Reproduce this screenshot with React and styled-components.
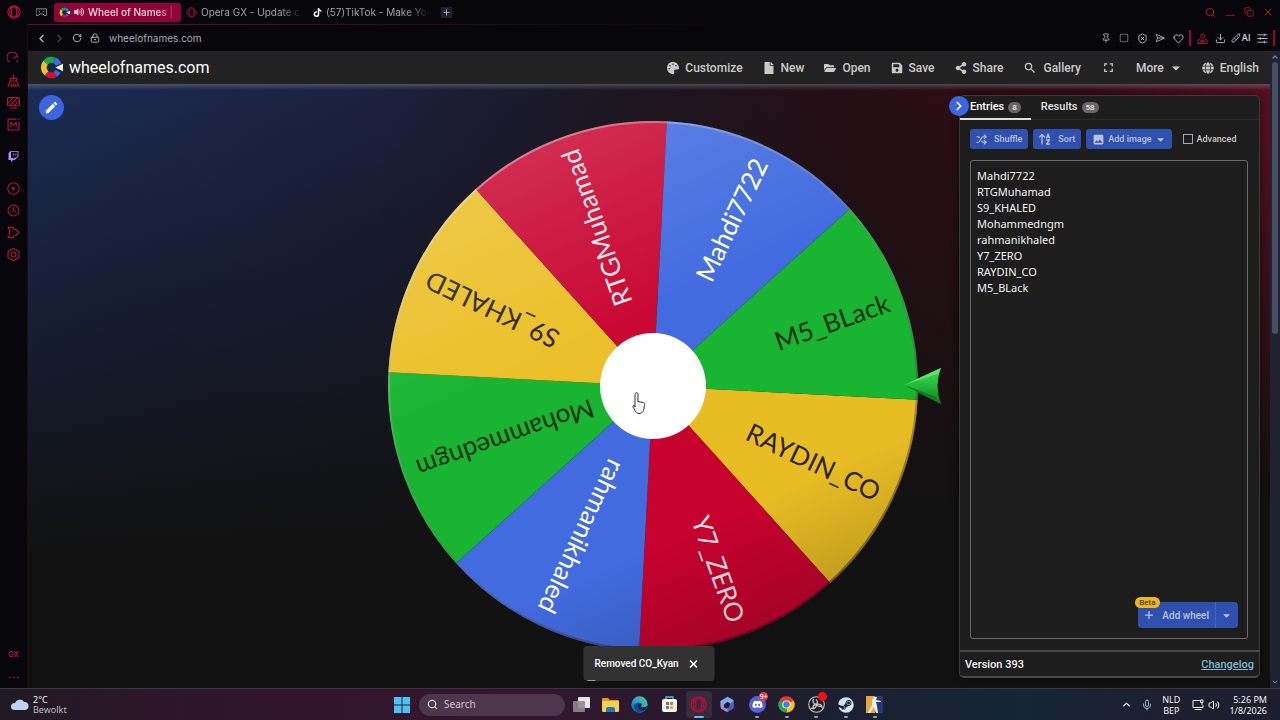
import React from "react";
import styled, { createGlobalStyle, css } from "styled-components";
import {
  ChevronLeft, ChevronRight, ChevronUp, ChevronDown, RotateCw, LockKeyhole, Pin, SquareDashed, ShieldX,
  SendHorizontal, Heart, Download, Search, X, Plus, Clock, Puzzle, Hexagon, Mic, Volume2, Shuffle, Copy,
} from "lucide-react";
import {
  FaPalette, FaFile, FaFolderOpen, FaSave, FaShareAlt, FaGlobe, FaTiktok, FaTwitch, FaVolumeUp, FaCaretDown,
  FaSteam, FaDiscord,
} from "react-icons/fa";
import { MdFullscreen, MdEdit, MdImage, MdSearch } from "react-icons/md";

const GlobalStyle = createGlobalStyle`
  *, *::before, *::after { box-sizing: border-box; }
  body { margin: 0; background: #111; font-family: Roboto, "Liberation Sans", sans-serif; }
  button, input, textarea { font: inherit; color: inherit; }
  button { border: 0; padding: 0; background: none; cursor: pointer; }
  svg { display: block; flex: none; }
  a { color: inherit; }
`;

const crimson = "#c01443";

const Desktop = styled.div`
  min-height: 100vh;
  display: flex;
  flex-direction: column;
`;
const Browser = styled.div`
  flex: 1;
  display: flex;
  flex-direction: column;
  background: #06060b;
`;

/* ---- tab strip ---- */
const TabStrip = styled.div`
  height: 24px;
  display: flex;
  align-items: center;
  font: 400 10px/18px Inter, "Liberation Sans", sans-serif;
  color: #a3a2ac;
`;
const StripIcon = styled.button`
  width: ${(p) => p.$w || 28}px;
  height: 24px;
  display: grid;
  place-items: center;
  color: ${(p) => (p.$red ? crimson : "#9c9ca8")};
`;
const Tab = styled.button`
  width: 127px;
  height: 19px;
  padding: 0 5px;
  display: flex;
  align-items: center;
  gap: 4px;
  border-radius: 3px;
  text-align: left;
  ${(p) => p.$active && css`background: #920437; color: #f3d7df; font-weight: 500;`}
`;
const TabTitle = styled.span`
  flex: 1;
  min-width: 0;
  overflow: hidden;
  white-space: nowrap;
  mask-image: linear-gradient(90deg, #000 78%, transparent);
`;
const NewTab = styled.button`
  width: 11px;
  height: 11px;
  margin-left: 6px;
  display: grid;
  place-items: center;
  background: #20202c;
  color: #c8c8d2;
`;
const WindowControls = styled.div`
  margin-left: auto;
  padding-right: 3px;
  display: flex;
`;

/* ---- browser body ---- */
const Body = styled.div`
  flex: 1;
  display: flex;
`;
const Sidebar = styled.nav`
  width: 28px;
  padding-top: 23px;
  display: flex;
  flex-direction: column;
  align-items: center;
  border-right: 1px solid #260812;
  color: #ae1540;
`;
const SideButton = styled.button`
  width: 22px;
  height: 22px;
  margin-top: ${(p) => (p.$gap ? 10 : 0)}px;
  display: grid;
  place-items: center;
  font: 700 7px/10px Inter, sans-serif;
`;
const SideBottom = styled.div`
  margin-top: auto;
`;
const Page = styled.div`
  flex: 1;
  min-width: 0;
  display: flex;
  flex-direction: column;
`;
const AddressBar = styled.div`
  height: 27px;
  padding: 0 3px 0 4px;
  display: flex;
  align-items: center;
  color: #c2c2cb;
  border-top: 1px solid;
  border-image: linear-gradient(90deg, #6b0a2b, #2c0715 35%, transparent 58%) 1;
`;
const BarButton = styled.button`
  width: 18px;
  height: 18px;
  display: grid;
  place-items: center;
  color: ${(p) => (p.$red ? crimson : p.$dim ? "#4c4c57" : "inherit")};
`;
const Url = styled.input`
  flex: 1;
  min-width: 0;
  margin-left: 5px;
  padding: 0;
  border: 0;
  outline: 0;
  background: none;
  color: #a9a9b3;
  font: 400 10px/16px Inter, "Liberation Sans", sans-serif;
`;
const RedBar = styled.span`
  width: 2px;
  height: 16px;
  margin: 0 2px;
  background: #8c0d34;
`;
const AiButton = styled(BarButton)`
  width: 24px;
  display: flex;
  align-items: center;
  justify-content: center;
  font: 600 9px/12px Inter, sans-serif;
`;
const Viewport = styled.div`
  flex: 1;
  display: flex;
`;
const Scrollbar = styled.div`
  width: 10px;
  padding: 2px 2px 2px 1px;
  display: flex;
  flex-direction: column;
  align-items: center;
  justify-content: space-between;
  background: #202230;
  color: #777b90;
`;
const Thumb = styled.div`
  width: 6px;
  flex: 0 0 43%;
  margin: 1px 0 auto;
  border-radius: 3px;
  background: #484d66;
`;

/* ---- site ---- */
const Site = styled.div`
  flex: 1;
  min-width: 0;
  display: flex;
  flex-direction: column;
`;
const SiteHeader = styled.header`
  height: 33px;
  padding: 0 11px 0 12px;
  display: flex;
  align-items: center;
  justify-content: space-between;
  background: #222;
`;
const Brand = styled.a`
  display: flex;
  align-items: center;
  gap: 6px;
  color: #fff;
  font-size: 16px;
  line-height: 20px;
  text-decoration: none;
`;
const Nav = styled.nav`
  display: flex;
  align-items: center;
  gap: 20px;
`;
const NavButton = styled.button`
  display: flex;
  align-items: center;
  gap: 6px;
  color: #cacaca;
  font-size: 12px;
  font-weight: 500;
  line-height: 16px;
`;
const Main = styled.main`
  flex: 1;
  display: flex;
  position: relative;
  padding: 0 10px 10px 0;
  background:
    linear-gradient(180deg, rgba(120, 125, 140, 0.5), transparent 6px),
    linear-gradient(178deg, transparent, rgba(17, 17, 17, 0.5) 35%, #111 72%),
    linear-gradient(90deg, #1b2c56, #1c2140 28%, #1d1824 46%, #270f16 66%, #3a0c16 84%, #620f22);
`;
const Stage = styled.section`
  flex: 1;
  min-width: 0;
  padding: 11px 17px 0 11px;
  display: flex;
  align-items: flex-start;
  justify-content: space-between;
`;
const RoundButton = styled.button`
  width: ${(p) => p.$size}px;
  height: ${(p) => p.$size}px;
  display: grid;
  place-items: center;
  border-radius: 50%;
  background: #3c66e0;
  color: #fff;
`;
const WheelSvg = styled.svg`
  width: 554px;
  max-width: calc(100% - 30px);
  margin-top: 26px;
  overflow: visible;
  font: 400 26px Lato, "Liberation Sans", sans-serif;
`;

/* ---- entries panel ---- */
const Panel = styled.aside`
  position: relative;
  width: 301px;
  margin-top: 11px;
  display: flex;
  flex-direction: column;
  background: #1d1d1d;
  border: 1px solid #3a3a3a;
  border-bottom: 2px solid #484848;
  border-radius: 5px;
  box-shadow: 0 0 8px rgba(0, 0, 0, 0.5);
`;
const CollapseSpot = styled.div`
  position: absolute;
  left: -11px;
  top: 0;
`;
const PanelTabs = styled.div`
  height: 24px;
  display: flex;
  border-bottom: 1px solid #2b2b2b;
`;
const PanelTab = styled.button`
  height: 24px;
  padding: 0 10px;
  display: flex;
  align-items: center;
  gap: 4px;
  font-size: 11px;
  font-weight: 500;
  line-height: 14px;
  color: ${(p) => (p.$active ? "#fff" : "#e3e3e3")};
  border-bottom: 2px solid ${(p) => (p.$active ? "#ddd" : "transparent")};
`;
const Count = styled.span`
  padding: 0 4px;
  border-radius: 6px;
  background: #666;
  color: #e6e6e6;
  font-size: 8px;
  line-height: 11px;
`;
const Tools = styled.div`
  padding: 9px 10px 0;
  display: flex;
  align-items: center;
  gap: 5px;
`;
const ToolButton = styled.button`
  height: 20px;
  padding: 0 6px;
  display: flex;
  align-items: center;
  gap: ${(p) => p.$gap || 7}px;
  border-radius: 3px;
  background: #3050b0;
  color: #b9c3e4;
  font-size: 9px;
  font-weight: 500;
  line-height: 12px;
  white-space: nowrap;
`;
const CheckLabel = styled.label`
  margin-left: 6px;
  display: flex;
  align-items: center;
  gap: 4px;
  color: #c9c9c9;
  font-size: 9px;
  font-weight: 500;
`;
const Check = styled.input`
  appearance: none;
  width: 10px;
  height: 10px;
  margin: 0;
  border: 1px solid #a8a8a8;
  &:checked { background: #3050b0; }
`;
const EntryBox = styled.div`
  position: relative;
  flex: 1;
  margin: 11px 11px 11px 10px;
  display: flex;
`;
const Entries = styled.textarea`
  flex: 1;
  min-width: 0;
  padding: 7px 6px;
  border: 1px solid #6b6b6b;
  border-radius: 3px;
  outline: 0;
  resize: none;
  background: transparent;
  color: #f2f2f2;
  font: 400 11px/16px "Noto Sans", "Open Sans", sans-serif;
`;
const AddWheel = styled.div`
  position: absolute;
  right: 10px;
  bottom: 11px;
  display: flex;
  border-radius: 4px;
  background: #3050b0;
  color: #b9c3e4;
`;
const AddWheelButton = styled.button`
  height: 26px;
  padding: 0 6px 0 5px;
  display: flex;
  align-items: center;
  gap: 7px;
  font-size: 10px;
  font-weight: 500;
  & + & { border-left: 1px solid #4564bd; }
`;
const Beta = styled.span`
  position: absolute;
  left: -3px;
  top: -5px;
  padding: 0 4px;
  border-radius: 6px;
  background: #edb81f;
  color: #2a2205;
  font-size: 8px;
  line-height: 11px;
`;
const PanelFooter = styled.footer`
  height: 26px;
  padding: 0 5px;
  display: flex;
  align-items: center;
  justify-content: space-between;
  border-top: 2px solid #484848;
  font-size: 11px;
  font-weight: 500;
  color: #f2f2f2;
`;
const Changelog = styled.a`
  color: #78b9d6;
`;

const Toast = styled.div`
  position: absolute;
  left: 50%;
  bottom: 7px;
  transform: translateX(-50%);
  height: 35px;
  min-width: 131px;
  padding: 0 15px 0 11px;
  display: flex;
  align-items: center;
  justify-content: space-between;
  border-radius: 4px;
  background: #323232;
  color: #fff;
  font-size: 10px;
  font-weight: 500;
  white-space: nowrap;
  &::after {
    content: "";
    position: absolute;
    left: 4px;
    bottom: 0;
    width: 8px;
    height: 1px;
    background: #9a9a9a;
  }
`;

/* ---- taskbar ---- */
const Taskbar = styled.footer`
  height: 32px;
  padding: 0 13px 0 11px;
  display: grid;
  grid-template-columns: 1fr auto 1fr;
  align-items: center;
  border-top: 1px solid #3b3541;
  background: linear-gradient(90deg, #1f1a22, #281828 8%, #32152c 22%, #32172f 42%, #251a2d 56%, #1b2030 66%, #152636 80%, #1e1f2f 90%, #1d1e2d);
  color: #f0f0f0;
  font: 400 9px/11px "Noto Sans", "Open Sans", sans-serif;
`;
const Weather = styled.button`
  display: flex;
  align-items: center;
  gap: 4px;
  text-align: left;
  line-height: 10px;
  span { color: #bdb8c0; }
`;
const Dock = styled.div`
  display: flex;
  align-items: center;
`;
const StartButton = styled.button`
  width: 24px;
  margin-right: 5px;
  display: grid;
  place-items: center;
`;
const SearchBox = styled.label`
  width: 146px;
  height: 22px;
  margin-right: 3px;
  padding: 0 8px;
  display: flex;
  align-items: center;
  gap: 6px;
  border-radius: 11px;
  background: #4b364b;
`;
const SearchInput = styled.input`
  width: 100%;
  padding: 0;
  border: 0;
  outline: 0;
  background: none;
  font-size: 10px;
  &::placeholder { color: #cfc4cf; opacity: 1; }
`;
const Apps = styled.div`
  width: 320px;
  display: flex;
  justify-content: space-between;
`;
const AppButton = styled.button`
  position: relative;
  width: 26px;
  height: 27px;
  display: grid;
  place-items: center;
  border-radius: 3px;
  background: ${(p) => (p.$active ? "rgba(255,255,255,0.08)" : "none")};
  ${(p) => p.$run && css`
    &::after {
      content: "";
      position: absolute;
      left: 50%;
      bottom: 0;
      width: ${p.$active ? 10 : 4}px;
      height: 2px;
      transform: translateX(-50%);
      border-radius: 1px;
      background: ${p.$active ? "#5cc3f2" : "#9aa0ac"};
    }
  `}
`;
const Badge = styled.span`
  position: absolute;
  right: 2px;
  top: 1px;
  min-width: 9px;
  height: 9px;
  border-radius: 5px;
  background: ${(p) => p.$color};
  color: #fff;
  font-size: 7px;
  line-height: 9px;
  text-align: center;
`;
const Tray = styled.div`
  display: flex;
  align-items: center;
  justify-content: flex-end;
  gap: 9px;
`;
const TrayText = styled.div`
  text-align: ${(p) => p.$align};
  line-height: 11px;
`;
const TrayPair = styled.div`
  margin: 0 0 0 3px;
  display: flex;
  align-items: center;
  gap: 4px;
`;

/* ---- drawings ---- */
const Ico = ({ s = 12, children, ...rest }) => (
  <svg width={s} height={s} viewBox="0 0 24 24" fill="none" stroke="currentColor" strokeWidth="2" strokeLinecap="round" strokeLinejoin="round" aria-hidden="true" {...rest}>
    {children}
  </svg>
);
const OperaMark = ({ s, color = crimson }) => (
  <Ico s={s} stroke={color} strokeWidth="1.8">
    <circle cx="12" cy="12" r="10.5" />
    <ellipse cx="12" cy="12" rx="4.6" ry="8.6" />
    <path d="M8 3.5C3.5 7 3.500 17 8 20.500M16 3.500c4.500 3.500 4.500 13.500 0 17" />
  </Ico>
);
const ring = (a0, a1, r, w) => {
  const p = (a, q) => `${(12 + q * Math.cos((a * Math.PI) / 180)).toFixed(2)} ${(12 + q * Math.sin((a * Math.PI) / 180)).toFixed(2)}`;
  return `M${p(a0, r)}A${r} ${r} 0 0 1 ${p(a1, r)}L${p(a1, w)}A${w} ${w} 0 0 0 ${p(a0, w)}Z`;
};
const WheelLogo = ({ s }) => (
  <svg width={s} height={s} viewBox="0 0 24 24" aria-hidden="true">
    <circle cx="12" cy="12" r="12" fill="#14284d" />
    <path d={ring(30, 60, 11, 5)} fill="#3c6be0" />
    <path d={ring(60, 130, 11, 5)} fill="#d80f35" />
    <path d={ring(130, 220, 11, 5)} fill="#ecc22e" />
    <path d={ring(220, 290, 11, 5)} fill="#1ba93a" />
    <path d={ring(290, 338, 11, 5)} fill="#3c6be0" />
    <path d="M16 12l8-4v8z" fill="#fff" />
  </svg>
);

const slices = [
  { name: "RAYDIN_CO", fill: "#e8bd24", ink: "#2a2107" },
  { name: "Y7_ZERO", fill: "#c8022f", ink: "#fbe6ea" },
  { name: "rahmanikhaled", fill: "#426be0", ink: "#fff" },
  { name: "Mohammedngm", fill: "#19b431", ink: "#0b3210" },
  { name: "S9_KHALED", fill: "#ebc02a", ink: "#2a2107" },
  { name: "RTGMuhamad", fill: "#c90833", ink: "#fbe6ea" },
  { name: "Mahdi7722", fill: "#426be0", ink: "#fff" },
  { name: "M5_BLack", fill: "#19b431", ink: "#0b3210" },
];
const R = 265;
const point = (deg) => `${(R + R * Math.cos((deg * Math.PI) / 180)).toFixed(2)} ${(R + R * Math.sin((deg * Math.PI) / 180)).toFixed(2)}`;

const Wheel = () => (
  <WheelSvg viewBox="0 0 554 530" role="img" aria-label="Wheel with eight names">
    <defs>
      <linearGradient id="gloss" x1="0.3" y1="0" x2="0.75" y2="1">
        <stop offset="0" stopColor="#fff" stopOpacity="0.16" />
        <stop offset="0.38" stopColor="#fff" stopOpacity="0" />
        <stop offset="0.74" stopColor="#000" stopOpacity="0" />
        <stop offset="1" stopColor="#000" stopOpacity="0.22" />
      </linearGradient>
      <linearGradient id="rim" x1="0.2" y1="0" x2="0.8" y2="1">
        <stop offset="0" stopColor="#fff" stopOpacity="0.45" />
        <stop offset="0.45" stopColor="#888" stopOpacity="0.3" />
        <stop offset="1" stopColor="#000" stopOpacity="0.5" />
      </linearGradient>
      <linearGradient id="arrow" x1="0" y1="0" x2="0" y2="1">
        <stop offset="0" stopColor="#42dc55" />
        <stop offset="0.5" stopColor="#24b83a" />
        <stop offset="1" stopColor="#0c7a20" />
      </linearGradient>
    </defs>
    {slices.map((s, i) => (
      <path key={s.name} d={`M${R} ${R}L${point(3 + i * 45)}A${R} ${R} 0 0 1 ${point(48 + i * 45)}Z`} fill={s.fill} />
    ))}
    {slices.map((s, i) => (
      <text key={s.name} x={R + 250} y={R} dy="9" textAnchor="end" fill={s.ink} transform={`rotate(${25.5 + i * 45} ${R} ${R})`}>
        {s.name}
      </text>
    ))}
    <circle cx={R} cy={R} r={R} fill="url(#gloss)" />
    <circle cx={R} cy={R} r={R - 1} fill="none" stroke="url(#rim)" strokeWidth="2" />
    <circle cx={R} cy={R} r="53" fill="#fff" />
    <path d="M516 264L553 247Q546 265 553 283Z" fill="url(#arrow)" />
    <path d="M516 264L553 247L549 253Z" fill="#5ae86c" />
    <path d="M516 264L553 283L548 276Z" fill="#0e7d22" />
    <path d="M247 286v-12.500a1.500 1.500 0 0 1 3-.5v7.500l5 1c1.500.500 2 1.500 1.500 3l-1 5c-1 2-2 3-4.500 3-2 0-3-1-4-3l-2-3.500c-.500-1.500 1-2.500 2-1z M250 281v-1" fill="#fff" stroke="#333" strokeWidth="1" strokeLinejoin="round" />
  </WheelSvg>
);

const EdgeIcon = () => (
  <svg width="17" height="17" viewBox="0 0 24 24" aria-hidden="true">
    <defs>
      <linearGradient id="edge" x1="0" y1="1" x2="1" y2="0">
        <stop offset="0" stopColor="#0b5fc0" /><stop offset="0.5" stopColor="#23a5dc" /><stop offset="1" stopColor="#56d364" />
      </linearGradient>
    </defs>
    <circle cx="12" cy="12" r="11.500" fill="url(#edge)" />
    <path d="M9 12c0-3 5-4 6 0 0 2-2 2-1 3 3 2 8 0 9-1-1 5-6 9.500-11 9C5 22 2 16 5 12c2-3 6-3 7-2-2 0-3 1-3 2z" fill="#0c4d9a" />
    <path d="M12 10c3 0 4 3 2 5 2 2 7 1 9-1l-2 5c-5 3-11 0-11-5 0-2 1-4 2-4z" fill="#1d2236" />
  </svg>
);
const ChromeIcon = () => (
  <svg width="17" height="17" viewBox="0 0 24 24" aria-hidden="true">
    <path d="M12 12L2.040 6.250A11.500 11.500 0 0 1 21.960 6.250Z" fill="#e33b2e" />
    <path d="M12 12L21.960 6.250A11.500 11.500 0 0 1 12 23.500Z" fill="#fbc116" />
    <path d="M12 12L12 23.500A11.500 11.500 0 0 1 2.040 6.250Z" fill="#31a350" />
    <circle cx="12" cy="12" r="5.800" fill="#fff" /><circle cx="12" cy="12" r="4.500" fill="#3f7de8" />
  </svg>
);
const apps = [
  { label: "Task view", icon: <svg width="17" height="15" viewBox="0 0 17 15"><rect x="5" y="0" width="12" height="11" rx="1" fill="#e9e6ea" /><rect x="0" y="4" width="12" height="11" rx="1" fill="#8f8790" opacity=".9" /></svg> },
  { label: "File Explorer", icon: <svg width="17" height="15" viewBox="0 0 17 15"><path d="M0 2q0-1 1-1h5l2 2h8q1 0 1 1v4H0z" fill="#d99b1c" /><rect y="4" width="17" height="11" rx="1" fill="#f7cf4d" /><path d="M4 15v-3q0-2 2-2h5q2 0 2 2v3z" fill="#2476c4" /></svg> },
  { label: "Edge", icon: <EdgeIcon /> },
  { label: "Microsoft Store", icon: <svg width="17" height="17" viewBox="0 0 17 17"><path d="M5 4V1h7v3" fill="none" stroke="#4ab6ea" strokeWidth="1.500" /><rect x="1" y="3" width="15" height="13" rx="2" fill="#f4f4f4" /><path d="M5 6h3v3H5z" fill="#e8472a" /><path d="M9 6h3v3H9z" fill="#6fae2c" /><path d="M5 10h3v3H5z" fill="#2a93d5" /><path d="M9 10h3v3H9z" fill="#edb21c" /></svg> },
  { label: "Opera GX", icon: <OperaMark s={17} color="#b20d3c" />, run: true, active: true },
  { label: "Microsoft 365", icon: <svg width="17" height="17" viewBox="0 0 24 24"><path d="M12 1l9 5-3 6-6-4-5 4v5l-5-3V7z" fill="#84a9e8" /><path d="M21 6v11l-9 6-6-4 8-3 2-5z" fill="#4f5fc4" /><path d="M2 14l5-2v4l5 3v4l-9-5z" fill="#a78bd8" /></svg> },
  { label: "Discord", icon: <svg width="17" height="17" viewBox="0 0 17 17"><circle cx="8.500" cy="8.500" r="8.500" fill="#5560df" /><FaDiscord x="3" y="3" size={11} color="#fff" /></svg>, run: true, badge: "9+", color: "#d33f4e" },
  { label: "Chrome", icon: <ChromeIcon />, run: true },
  { label: "OBS Studio", icon: <svg width="17" height="17" viewBox="0 0 24 24"><circle cx="12" cy="12" r="11" fill="#1d1d22" stroke="#c8c8cc" strokeWidth="1.500" /><path d="M12 12c-5-1-6-5-4-8M12 12c5-2 8 1 8 5M12 12c0 5-4 7-8 5M12 12c2-3 1-6-1-7M12 12c2 3 5 3 7 2M12 12c-3 0-5 2-5 5" fill="none" stroke="#c8c8cc" strokeWidth="1.800" /></svg>, run: true, badge: "", color: "#ef1010" },
  { label: "Steam", icon: <FaSteam size={16} color="#cfe6f2" />, run: true },
  { label: "Counter-Strike", icon: <svg width="17" height="17" viewBox="0 0 17 17"><path d="M0 0h9v17H0z" fill="#eaa63a" /><path d="M9 0h8v17H9z" fill="#27387c" /><path d="M8 1h3l-1 3 5 1v1h-5l1 4 1 7h-2l-2-6-4 6H2l4-8V4z" fill="#f2f2f2" /></svg>, run: true },
];

const sideItems = [
  { label: "Speed", icon: <Ico s={13}><path d="M4 18a10 10 0 1 1 16-8M12 12l6-5M18 18l2-2" /></Ico> },
  { label: "Cleaner", icon: <Ico s={13}><path d="M12 1v7M6 8h12v5H6zM6 13l-4 9h20l-4-9M8 22v-4M12 22v-4M16 22v-4" /></Ico> },
  { label: "Mods", icon: <Ico s={13}><rect x="1" y="3" width="22" height="15" rx="2" /><path d="M6 22h12M2 13L12 3M5 18L19 4M13 18l9-9" /></Ico> },
  { label: "Music", icon: <Ico s={13}><path d="M22 8v14H2V2h15M22 2v1M7 16V8l5 5 5-5v8" /></Ico> },
  { label: "Twitch", gap: true, icon: <FaTwitch size={11} color="#b38cff" /> },
  { label: "Player", gap: true, icon: <Ico s={13}><circle cx="12" cy="12" r="10.500" /><path d="M10.500 9.500v5l4-2.500z" fill="currentColor" /></Ico> },
  { label: "History", icon: <Clock size={13} /> },
  { label: "Extensions", icon: <Ico s={13}><path d="M2 3h10c0 3 2 5 4 3l6 6-6 6c-2-2-4 0-4 3H2c4-5 4-13 0-18z" /></Ico> },
  { label: "Settings", icon: <Ico s={13}><path d="M12 1l10 5v12l-10 5-10-5V6z" /><circle cx="12" cy="12" r="4.500" /></Ico> },
];

const navItems = [
  { text: "Customize", Icon: FaPalette },
  { text: "New", Icon: FaFile },
  { text: "Open", Icon: FaFolderOpen },
  { text: "Save", Icon: FaSave },
  { text: "Share", Icon: FaShareAlt },
  { text: "Gallery", Icon: MdSearch, size: 14 },
];

const names = "Mahdi7722\nRTGMuhamad\nS9_KHALED\nMohammedngm\nrahmanikhaled\nY7_ZERO\nRAYDIN_CO\nM5_BLack";

export default function App() {
  return (
    <Desktop>
      <GlobalStyle />
      <Browser>
        <TabStrip>
          <StripIcon aria-label="Opera menu" $red><OperaMark s={14} /></StripIcon>
          <StripIcon $w={26} aria-label="GX corner">
            <Ico s={11}><path d="M1 4h22v14h-5l-3-3H9l-3 3H1zM7 9v2M17 9v2" /></Ico>
          </StripIcon>
          <Tab $active><WheelLogo s={11} /><FaVolumeUp size={10} /><TabTitle>Wheel of Names | Random name picker</TabTitle></Tab>
          <Tab $w><OperaMark s={11} color="#8e1237" /><TabTitle>Opera GX - Update complete</TabTitle></Tab>
          <Tab><FaTiktok size={9} color="#fff" /><TabTitle>(57)TikTok - Make Your Day</TabTitle></Tab>
          <NewTab aria-label="New tab"><Plus size={9} /></NewTab>
          <WindowControls>
            <StripIcon $w={19} $red aria-label="Search tabs"><Search size={11} /></StripIcon>
            <StripIcon $w={19} $red aria-label="Minimize"><Ico s={10}><path d="M2 20h20" /></Ico></StripIcon>
            <StripIcon $w={19} $red aria-label="Restore"><Copy size={10} style={undefined} /></StripIcon>
            <StripIcon $w={19} $red aria-label="Close"><X size={12} /></StripIcon>
          </WindowControls>
        </TabStrip>
        <Body>
          <Sidebar>
            {sideItems.map((s) => <SideButton key={s.label} aria-label={s.label} $gap={s.gap}>{s.icon}</SideButton>)}
            <SideBottom>
              <SideButton>GX</SideButton>
              <SideButton aria-label="More"><Ico s={11}><path d="M3 12h1M12 12h1M21 12h1" strokeWidth="3" /></Ico></SideButton>
            </SideBottom>
          </Sidebar>
          <Page>
            <AddressBar>
              <BarButton aria-label="Back"><ChevronLeft size={13} /></BarButton>
              <BarButton aria-label="Forward" $dim><ChevronRight size={13} /></BarButton>
              <BarButton aria-label="Reload"><RotateCw size={10} /></BarButton>
              <BarButton aria-label="Site security" style={undefined}><LockKeyhole size={10} /></BarButton>
              <Url aria-label="Address" defaultValue="wheelofnames.com" />
              <BarButton aria-label="Pin"><Pin size={10} /></BarButton>
              <BarButton aria-label="Snapshot"><SquareDashed size={10} /></BarButton>
              <BarButton aria-label="Ad blocker"><ShieldX size={11} /></BarButton>
              <BarButton aria-label="Send"><SendHorizontal size={10} /></BarButton>
              <BarButton aria-label="Favorite"><Heart size={11} /></BarButton>
              <RedBar />
              <BarButton aria-label="Profile" $red>
                <Ico s={11}><circle cx="12" cy="7" r="4.500" /><path d="M2 22v-6l4-2 3 3h6l3-3 4 2v6zM7 19h10" /></Ico>
              </BarButton>
              <BarButton aria-label="Downloads"><Download size={11} /></BarButton>
              <AiButton><Ico s={10}><path d="M3 17L14 6l4 4L9 21l-5 1zM16 3l5-1-1 6M8 12l4 4" /></Ico>AI</AiButton>
              <BarButton aria-label="Easy setup"><Ico s={11}><path d="M2 4h20M2 12h20M2 20h20M16 2v4M7 10v4M16 18v4" /></Ico></BarButton>
              <RedBar />
            </AddressBar>
            <Viewport>
              <Site>
                <SiteHeader>
                  <Brand href="#"><WheelLogo s={23} />wheelofnames.com</Brand>
                  <Nav>
                    {navItems.map(({ text, Icon, size }) => <NavButton key={text}><Icon size={size || 12} />{text}</NavButton>)}
                    <NavButton aria-label="Fullscreen"><MdFullscreen size={15} /></NavButton>
                    <NavButton>More<FaCaretDown size={12} /></NavButton>
                    <NavButton><FaGlobe size={12} />English</NavButton>
                  </Nav>
                </SiteHeader>
                <Main>
                  <Stage>
                    <RoundButton $size={25} aria-label="Edit title"><MdEdit size={15} /></RoundButton>
                    <Wheel />
                  </Stage>
                  <Panel>
                    <PanelTabs>
                      <PanelTab $active>Entries<Count>8</Count></PanelTab>
                      <PanelTab>Results<Count>58</Count></PanelTab>
                    </PanelTabs>
                    <CollapseSpot>
                      <RoundButton $size={20} aria-label="Hide panel"><ChevronRight size={14} strokeWidth={3} /></RoundButton>
                    </CollapseSpot>
                    <Tools>
                      <ToolButton><Shuffle size={11} strokeWidth={2.5} />Shuffle</ToolButton>
                      <ToolButton>
                        <Ico s={12} strokeWidth="2.600"><path d="M6 22V3M1 8l5-5 5 5M15 10l3-8 3 8M16 8h4M15 14h6l-6 8h6" /></Ico>
                        Sort
                      </ToolButton>
                      <ToolButton $gap={3}><MdImage size={13} />Add image<FaCaretDown size={11} /></ToolButton>
                      <CheckLabel><Check type="checkbox" />Advanced</CheckLabel>
                    </Tools>
                    <EntryBox>
                      <Entries aria-label="Entries" spellCheck={false} defaultValue={names} />
                      <AddWheel>
                        <AddWheelButton><Plus size={12} strokeWidth={2.5} />Add wheel</AddWheelButton>
                        <AddWheelButton aria-label="More wheel options"><FaCaretDown size={11} /></AddWheelButton>
                        <Beta>Beta</Beta>
                      </AddWheel>
                    </EntryBox>
                    <PanelFooter>Version 393<Changelog href="#">Changelog</Changelog></PanelFooter>
                  </Panel>
                  <Toast role="status">Removed CO_Kyan<button aria-label="Dismiss"><X size={12} strokeWidth={3.5} /></button></Toast>
                </Main>
              </Site>
              <Scrollbar><ChevronUp size={8} strokeWidth={4} /><Thumb /><ChevronDown size={8} strokeWidth={3} /></Scrollbar>
            </Viewport>
          </Page>
        </Body>
      </Browser>
      <Taskbar>
        <Weather>
          <svg width="18" height="13" viewBox="0 0 18 13" aria-hidden="true"><path d="M4 12a4 3.500 0 0 1 0-7 5 5 0 0 1 9-1 4 4 0 0 1 1 8z" fill="#bcd3f3" /></svg>
          <div>2°C<br /><span>Bewolkt</span></div>
        </Weather>
        <Dock>
          <StartButton aria-label="Start">
            <svg width="16" height="16" viewBox="0 0 16 16"><path d="M0 0h7.500v7.500H0zM8.500 0H16v7.500H8.500zM0 8.500h7.500V16H0zM8.500 8.500H16V16H8.500z" fill="#4cc2f3" /></svg>
          </StartButton>
          <SearchBox><Search size={11} strokeWidth={2.5} /><SearchInput aria-label="Search" placeholder="Search" /></SearchBox>
          <Apps>
            {apps.map((a) => (
              <AppButton key={a.label} aria-label={a.label} $run={a.run} $active={a.active}>
                {a.icon}
                {a.badge !== undefined && <Badge $color={a.color}>{a.badge}</Badge>}
              </AppButton>
            ))}
          </Apps>
        </Dock>
        <Tray>
          <ChevronUp size={11} strokeWidth={3} />
          <Mic size={12} color="#7fc3cc" />
          <TrayText $align="center">NLD<br />BEP</TrayText>
          <TrayPair>
            <Ico s={12}><path d="M15 3H2v14h20v-4M6 21h12M18 2h4v5h-4zM20 7v4" /></Ico>
            <Volume2 size={12} />
          </TrayPair>
          <TrayText $align="right">5:26 PM<br />1/8/2026</TrayText>
        </Tray>
      </Taskbar>
    </Desktop>
  );
}
